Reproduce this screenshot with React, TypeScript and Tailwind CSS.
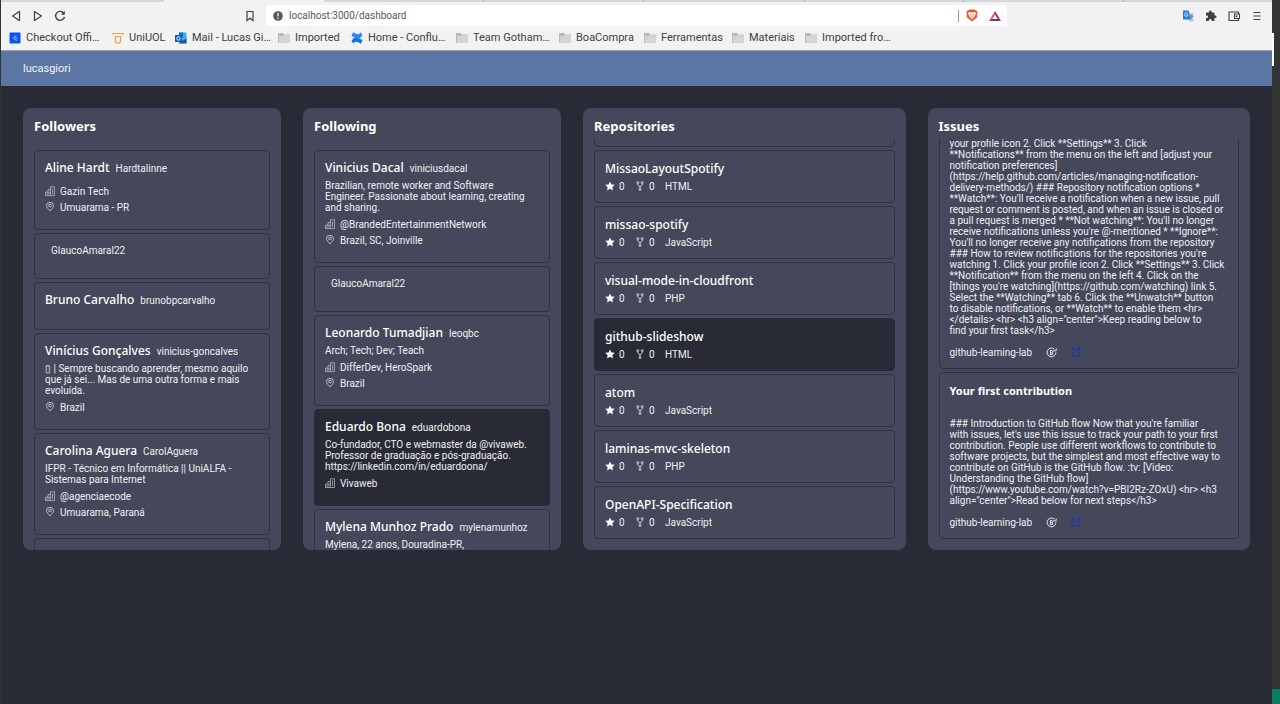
import { useLayoutEffect, useRef, type ReactNode } from "react";

type Person = { name: string; login: string; bio?: string; company?: string; location?: string; active?: boolean };
type Repo = { name: string; language: string; active?: boolean };
type Issue = { title: string; body: string };

const followers: Person[] = [
  { name: "Aline Hardt", login: "Hardtalinne", company: "Gazin Tech", location: "Umuarama - PR" },
  { name: "", login: "GlaucoAmaral22" },
  { name: "Bruno Carvalho", login: "brunobpcarvalho" },
  {
    name: "Vinícius Gonçalves",
    login: "vinicius-goncalves",
    bio: "▯ | Sempre buscando aprender, mesmo aquilo\nque já sei... Mas de uma outra forma e mais\nevoluída.",
    location: "Brazil",
  },
  {
    name: "Carolina Aguera",
    login: "CarolAguera",
    bio: "IFPR - Técnico em Informática || UniALFA -\nSistemas para Internet",
    company: "@agenciaecode",
    location: "Umuarama, Paraná",
  },
  { name: "", login: "" },
];

const following: Person[] = [
  {
    name: "Vinicius Dacal",
    login: "viniciusdacal",
    bio: "Brazilian, remote worker and Software\nEngineer. Passionate about learning, creating\nand sharing.",
    company: "@BrandedEntertainmentNetwork",
    location: "Brazil, SC, Joinville",
  },
  { name: "", login: "GlaucoAmaral22" },
  {
    name: "Leonardo Tumadjian",
    login: "leoqbc",
    bio: "Arch; Tech; Dev; Teach",
    company: "DifferDev, HeroSpark",
    location: "Brazil",
  },
  {
    name: "Eduardo Bona",
    login: "eduardobona",
    bio: "Co-fundador, CTO e webmaster da @vivaweb.\nProfessor de graduação e pós-graduação.\nhttps://linkedin.com/in/eduardoona/",
    company: "Vivaweb",
    active: true,
  },
  { name: "Mylena Munhoz Prado", login: "mylenamunhoz", bio: "Mylena, 22 anos, Douradina-PR," },
];

const repos: Repo[] = [
  { name: "", language: "" },
  { name: "MissaoLayoutSpotify", language: "HTML" },
  { name: "missao-spotify", language: "JavaScript" },
  { name: "visual-mode-in-cloudfront", language: "PHP" },
  { name: "github-slideshow", language: "HTML", active: true },
  { name: "atom", language: "JavaScript" },
  { name: "laminas-mvc-skeleton", language: "PHP" },
  { name: "OpenAPI-Specification", language: "JavaScript" },
];

const issues: Issue[] = [
  {
    title: "",
    body: `your profile icon 2. Click **Settings** 3. Click
**Notifications** from the menu on the left and [adjust your
notification preferences]
(https://help.github.com/articles/managing-notification-
delivery-methods/) ### Repository notification options *
**Watch**: You'll receive a notification when a new issue, pull
request or comment is posted, and when an issue is closed or
a pull request is merged * **Not watching**: You'll no longer
receive notifications unless you're @-mentioned * **Ignore**:
You'll no longer receive any notifications from the repository
### How to review notifications for the repositories you're
watching 1. Click your profile icon 2. Click **Settings** 3. Click
**Notification** from the menu on the left 4. Click on the
[things you're watching](https://github.com/watching) link 5.
Select the **Watching** tab 6. Click the **Unwatch** button
to disable notifications, or **Watch** to enable them <hr>
</details> <hr> <h3 align="center">Keep reading below to
find your first task</h3>`,
  },
  {
    title: "Your first contribution",
    body: `### Introduction to GitHub flow Now that you're familiar
with issues, let's use this issue to track your path to your first
contribution. People use different workflows to contribute to
software projects, but the simplest and most effective way to
contribute on GitHub is the GitHub flow. :tv: [Video:
Understanding the GitHub flow]
(https://www.youtube.com/watch?v=PBI2Rz-ZOxU) <hr> <h3
align="center">Read below for next steps</h3>`,
  },
];

function BuildingIcon() {
  return (
    <svg viewBox="0 0 20 20" className="size-[10px] shrink-0 opacity-80" fill="none" stroke="currentColor" strokeWidth="1.3" aria-hidden="true">
      <path d="M1 19V12h5V7h5V1.500h8V19ZM6 12v7M11 7v12M15 5v11M3.500 15v2M8.500 11v5" />
    </svg>
  );
}

function PinIcon() {
  return (
    <svg viewBox="0 0 20 20" className="size-[10px] shrink-0 opacity-90" fill="none" stroke="currentColor" strokeWidth="1.5" aria-hidden="true">
      <path d="M10 18C7 14 3 11 3 7a7 6.300 0 0 1 14 0C17 11 13 14 10 18Z" />
      <circle cx="10" cy="7" r="2.800" />
    </svg>
  );
}

function StarIcon() {
  return (
    <svg viewBox="0 0 20 20" className="size-[10px] shrink-0" fill="#ffffff" aria-hidden="true">
      <path d="m10 .8 2.900 6 6.600.9-4.800 4.600 1.200 6.600L10 15.700l-5.900 3.200 1.200-6.600L.5 7.700l6.600-.9Z" />
    </svg>
  );
}

function ForkIcon() {
  return (
    <svg viewBox="0 0 20 20" className="size-[10px] shrink-0" fill="none" stroke="currentColor" strokeWidth="1.700" aria-hidden="true">
      <circle cx="5.500" cy="3.200" r="1.900" />
      <circle cx="14.500" cy="3.200" r="1.900" />
      <circle cx="10" cy="17" r="1.900" />
      <path d="M5.500 5v2.500c0 2 4.500 2.500 4.500 4.500v3M14.500 5v2.500c0 2-4.500 2.500-4.500 4.500" />
    </svg>
  );
}

function ReopenIcon() {
  return (
    <svg viewBox="0 0 20 20" className="size-[11px]" fill="none" stroke="currentColor" strokeWidth="1.700" aria-hidden="true">
      <path d="M15.500 4A8 8 0 1 0 18 10M13 7h5.500V2.500" />
      <path d="M8 14V6.500h3a2 2 0 0 1 0 3.700H8M11 10.200a2 2 0 0 1 0 3.800H8" />
    </svg>
  );
}

function ExternalIcon() {
  return (
    <svg viewBox="0 0 20 20" className="size-[10px]" fill="none" stroke="currentColor" strokeWidth="2.200" aria-hidden="true">
      <path d="M8.500 3H2v15h15v-6.500M12 2h6v6M18 2l-8.500 8.500" />
    </svg>
  );
}

function Panel({ title, fromEnd, children }: { title: string; fromEnd?: boolean; children: ReactNode }) {
  const list = useRef<HTMLDivElement>(null);
  useLayoutEffect(() => {
    if (fromEnd && list.current) list.current.scrollTop = list.current.scrollHeight;
  }, [fromEnd]);
  return (
    <section className="flex h-[442px] min-w-0 flex-col overflow-hidden rounded-lg bg-[#44485a] px-[11px]">
      <h2 className="h-[31px] shrink-0 pt-[9px] font-['Noto_Sans',sans-serif] text-[13px] leading-[18px] font-bold text-white">
        {title}
      </h2>
      <div ref={list} className="flex min-h-0 flex-1 flex-col gap-[3px] overflow-y-auto py-[11px] [scrollbar-width:none]">
        {children}
      </div>
    </section>
  );
}

const card = "flex shrink-0 flex-col rounded-[4px] border border-[#30333f] px-[10px] pt-[9px]";
const activeCard = "flex shrink-0 flex-col rounded-[4px] border border-[#282b35] bg-[#282b35] px-[10px] pt-[9px]";

function PersonCard({ person }: { person: Person }) {
  return (
    <article className={`${person.active ? activeCard : card} pb-[14px]`}>
      <div className={person.name ? "flex h-4 items-center gap-[6px]" : "flex h-[14px] items-center gap-[6px]"}>
        <h3 className="font-['Noto_Sans',sans-serif] text-[12px] leading-[18px] font-medium whitespace-nowrap text-white">
          {person.name}
        </h3>
        <span className="whitespace-nowrap">{person.login}</span>
      </div>
      <p className="mt-1 mb-[3px] whitespace-pre">{person.bio}</p>
      {person.company && (
        <p className="flex h-4 items-center gap-[5px]">
          <BuildingIcon />
          {person.company}
        </p>
      )}
      {person.location && (
        <p className="flex h-4 items-center gap-[5px]">
          <PinIcon />
          {person.location}
        </p>
      )}
    </article>
  );
}

function RepoCard({ repo }: { repo: Repo }) {
  return (
    <article className={repo.active ? activeCard : card}>
      <h3 className="h-4 font-['Noto_Sans',sans-serif] text-[12px] leading-[18px] font-medium text-white">{repo.name}</h3>
      <div className="mt-[2px] mb-2 flex h-4 items-center">
        {repo.name && (
          <>
            <span className="flex w-[30px] items-center gap-1">
              <StarIcon />0
            </span>
            <span className="flex w-[30px] items-center gap-1">
              <ForkIcon />0
            </span>
            <span>{repo.language}</span>
          </>
        )}
      </div>
    </article>
  );
}

function IssueCard({ issue }: { issue: Issue }) {
  return (
    <article className={card}>
      <h3 className="h-[18px] font-['Noto_Sans',sans-serif] text-[11px] leading-[18px] font-bold text-white">{issue.title}</h3>
      <p className="mt-[18px] whitespace-pre">{issue.body}</p>
      <div className="my-2 flex h-4 items-center">
        <span className="w-24">github-learning-lab</span>
        <span className="w-[25px]">
          <ReopenIcon />
        </span>
        <a href="#issue" aria-label="Open issue" className="text-[#1a35b8]">
          <ExternalIcon />
        </a>
      </div>
    </article>
  );
}

function FolderIcon() {
  return (
    <svg viewBox="0 0 12 12" className="size-3 shrink-0" aria-hidden="true">
      <path d="M0 1h5l1 1.500h6V11H0Z" fill="#b9b9b9" />
      <path d="M1 4h4l1-1h6v8H1Z" fill="#d4d4d4" />
    </svg>
  );
}

function CheckoutIcon() {
  return (
    <svg viewBox="0 0 12 12" className="size-3 shrink-0" aria-hidden="true">
      <rect x=".5" y=".5" width="11" height="11" rx="1" fill="#0b53f0" />
      <path d="M7.500 3.500 5 4.500l3 1.300M3 6h3M8.500 7H5l3 1.800" stroke="#8fb4ff" strokeWidth=".8" fill="none" />
    </svg>
  );
}

function UolIcon() {
  return (
    <svg viewBox="0 0 12 12" className="size-3 shrink-0" fill="none" stroke="#eda23c" strokeWidth="1.200" aria-hidden="true">
      <path d="M1 3V1.500h10V3M2.500 4.500h7M3.500 4.500V9q0 2 2.500 2t2.500-2V4.500" />
    </svg>
  );
}

function OutlookIcon() {
  return (
    <svg viewBox="0 0 12 12" className="size-3 shrink-0" aria-hidden="true">
      <path d="M4 .5h7.500v10H4Z" fill="#2fb3ee" />
      <path d="M4 .5h4v5H4Z" fill="#1272c4" />
      <path d="m3 11.500 8.500-5v5Z" fill="#1b4f9b" />
      <rect y="3" width="7" height="7" rx=".6" fill="#0a5eb0" />
      <circle cx="3.500" cy="6.500" r="1.700" fill="none" stroke="#fff" />
    </svg>
  );
}

function ConfluenceIcon() {
  return (
    <svg viewBox="0 0 12 12" className="size-3 shrink-0" aria-hidden="true">
      <path d="M.5 9C3 4.500 5.500 4.500 11.500 8L10 11.800C6 9.500 4 8.800 2.500 11.800Z" fill="#1371ea" />
      <path d="M11.500 3C9 7.500 6.500 7.500.5 4L2 .2C6 2.500 8 3.200 9.500.2Z" fill="#2684ff" />
    </svg>
  );
}

const bookmarks = [
  { label: "Checkout Offi…", icon: <CheckoutIcon />, width: "w-[103px]" },
  { label: "UniUOL", icon: <UolIcon />, width: "w-[63px]" },
  { label: "Mail - Lucas Gi…", icon: <OutlookIcon />, width: "w-[103px]" },
  { label: "Imported", icon: <FolderIcon />, width: "w-[73px]" },
  { label: "Home - Conflu…", icon: <ConfluenceIcon />, width: "w-[105px]" },
  { label: "Team Gotham…", icon: <FolderIcon />, width: "w-[103px]" },
  { label: "BoaCompra", icon: <FolderIcon />, width: "w-[85px]" },
  { label: "Ferramentas", icon: <FolderIcon />, width: "w-[88px]" },
  { label: "Materiais", icon: <FolderIcon />, width: "w-[73px]" },
  { label: "Imported fro…", icon: <FolderIcon />, width: "w-[92px]" },
];

function BrowserChrome() {
  return (
    <div className="bg-[#f2f2f2] text-[#3c4043]">
      <div className="flex h-[2px] bg-[#d3d7da]">
        <span className="w-[163px]" />
        <span className="w-40 bg-[#f2f2f2]" />
        <span className="w-40 border-r border-[#a9adb1]" />
        <span className="w-40 border-r border-[#a9adb1]" />
        <span className="w-40" />
        <span className="w-40 border-x border-[#a9adb1]" />
        <span className="w-40 border-r border-[#a9adb1]" />
      </div>
      <div className="flex h-[27px] items-center">
        <div className="flex w-[244px] items-center gap-[10px] pl-[9px]">
          <button type="button" aria-label="Back">
            <svg viewBox="0 0 12 12" className="size-3" fill="none" stroke="#3c4043" strokeWidth="1.200" strokeLinejoin="round">
              <path d="M9.500 1.500v9L2.500 6Z" />
            </svg>
          </button>
          <button type="button" aria-label="Forward">
            <svg viewBox="0 0 12 12" className="size-3" fill="none" stroke="#3c4043" strokeWidth="1.200" strokeLinejoin="round">
              <path d="M2.500 1.500v9L9.500 6Z" />
            </svg>
          </button>
          <button type="button" aria-label="Reload">
            <svg viewBox="0 0 12 12" className="size-3" fill="none" stroke="#3c4043" strokeWidth="1.400">
              <path d="M9.800 3.200A4.500 4.500 0 1 0 10.500 7" />
              <path d="M10.800.8v4H7Z" fill="#3c4043" stroke="none" />
            </svg>
          </button>
        </div>
        <button type="button" aria-label="Bookmark this page" className="mr-[11px]">
          <svg viewBox="0 0 10 12" className="h-3 w-[10px]" fill="none" stroke="#3c4043" strokeWidth="1.200">
            <path d="M2 1.500h6v9L5 8.300l-3 2.200Z" />
          </svg>
        </button>
        <div className="flex h-[21px] w-[741px] items-center rounded-[2px] bg-white pr-[6px] pl-[7px]">
          <svg viewBox="0 0 12 12" className="size-[10px] shrink-0" aria-hidden="true">
            <circle cx="6" cy="6" r="5.800" fill="#55585c" />
            <path d="M6 2.500v4.200M6 8v1.500" stroke="#fff" strokeWidth="1.500" />
          </svg>
          <input
            aria-label="Address"
            defaultValue="localhost:3000/dashboard"
            className="ml-[6px] min-w-0 flex-1 bg-transparent text-[10px] leading-4 text-[#55595e] outline-none"
          />
          <span className="h-3 w-px bg-[#9a9da1]" />
          <button type="button" aria-label="Brave shields" className="ml-[7px]">
            <svg viewBox="0 0 12 13" className="h-[13px] w-3">
              <path d="M3.500.5h5L11.500 2.500 11 8.500 6 12.500 1 8.500.5 2.500Z" fill="#f1562b" />
              <path d="m3 3 1.500.4h3L9 3l1 1.500-1.500 3L6 10.500l-2.500-3L2 4.500Z" fill="#fff" />
              <path d="m3.500 5 1.500.5M8.500 5 7 5.500M6 5.500v2M4.800 8.500 6 8l1.200.5" stroke="#f1562b" strokeWidth=".8" fill="none" />
            </svg>
          </button>
          <button type="button" aria-label="Rewards" className="ml-[11px]">
            <svg viewBox="0 0 12 12" className="size-3">
              <path d="M6 1 0 11l3-1.500 3-5Z" fill="#f8542b" />
              <path d="M6 1l6 10-3-1.500-3-5Z" fill="#a1286e" />
              <path d="M0 11h12L9 9H3Z" fill="#5b3a94" />
            </svg>
          </button>
        </div>
        <div className="ml-auto flex items-center gap-[11px] pr-[9px]">
          <button type="button" aria-label="Translate">
            <svg viewBox="0 0 12 12" className="size-3">
              <path d="M5 3h6.500v8.500H7Z" fill="#c3c7cc" />
              <path d="M1 .5h5.500L9 9.500H1Z" fill="#1a82e8" />
              <path d="M5.800 3.800A1.700 1.700 0 1 0 6 5H4.500" fill="none" stroke="#fff" strokeWidth=".8" />
              <path d="M8 6h3M9.500 5v1M8.500 9l2-3" fill="none" stroke="#5f6a78" strokeWidth=".8" />
            </svg>
          </button>
          <button type="button" aria-label="Extensions">
            <svg viewBox="0 0 24 24" className="size-3" fill="#3c4043">
              <path d="M20.500 11H19V7c0-1.100-.9-2-2-2h-4V3.500a2.500 2.500 0 0 0-5 0V5H4c-1.100 0-2 .9-2 2v3.800h1.500a2.700 2.700 0 0 1 0 5.400H2V20c0 1.100.9 2 2 2h3.800v-1.500a2.700 2.700 0 0 1 5.400 0V22H17c1.100 0 2-.9 2-2v-4h1.500a2.500 2.500 0 0 0 0-5Z" />
            </svg>
          </button>
          <button type="button" aria-label="Wallet">
            <svg viewBox="0 0 12 12" className="size-3" fill="none" stroke="#3c4043" strokeWidth="1.100">
              <path d="M10.500 4V2H1v8.500h9.500V8.500M6.500 4h5v4.500h-5Z" />
              <circle cx="8.500" cy="6.200" r=".4" />
            </svg>
          </button>
          <button type="button" aria-label="Menu">
            <svg viewBox="0 0 12 12" className="size-3" stroke="#3c4043" strokeWidth="1.100">
              <path d="M2.500 2.500h7M2.500 6h7M2.500 9.500h7" />
            </svg>
          </button>
        </div>
      </div>
      <nav className="flex h-[22px] items-center border-b border-[#9aa3b3] pb-1 pl-2 text-[11px]">
        {bookmarks.map((b) => (
          <a key={b.label} href="#bookmark" className={`${b.width} flex shrink-0 items-center gap-[5px] whitespace-nowrap`}>
            {b.icon}
            {b.label}
          </a>
        ))}
      </nav>
    </div>
  );
}

export default function App() {
  return (
    <div className="flex min-h-screen bg-[#333333] pl-px font-[Roboto,sans-serif] text-[10px] leading-[11px] text-[#f0f0f3]">
      <div className="flex min-w-0 flex-1 flex-col bg-[#282b35]">
        <BrowserChrome />
        <header className="flex h-[35px] items-center bg-[#5b76a3] px-[22px] text-[11px] leading-4 text-[#f2f4f8]">lucasgiori</header>
        <main className="grid grid-cols-[4fr_4fr_5fr_5fr] gap-[22px] p-[22px]">
          <Panel title="Followers">
            {followers.map((p, i) => (
              <PersonCard key={i} person={p} />
            ))}
          </Panel>
          <Panel title="Following">
            {following.map((p, i) => (
              <PersonCard key={i} person={p} />
            ))}
          </Panel>
          <Panel title="Repositories" fromEnd>
            {repos.map((r, i) => (
              <RepoCard key={i} repo={r} />
            ))}
          </Panel>
          <Panel title="Issues" fromEnd>
            {issues.map((issue, i) => (
              <IssueCard key={i} issue={issue} />
            ))}
          </Panel>
        </main>
      </div>
      <div className="flex w-2 shrink-0 flex-col justify-between pt-[33px]">
        <span className="h-[33px] w-[2px] bg-white" />
        <span className="h-[15px] bg-[#0a7f60]" />
      </div>
    </div>
  );
}
